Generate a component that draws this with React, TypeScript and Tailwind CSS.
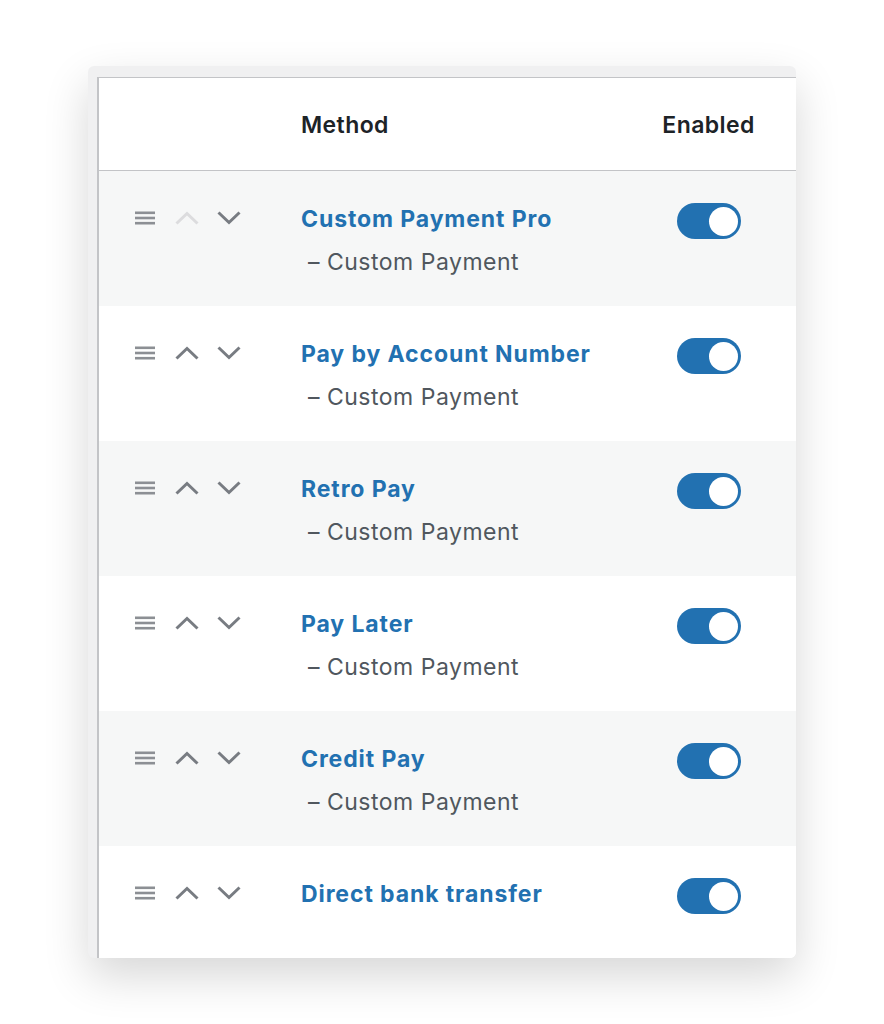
import React from "react";

type Method = {
  id: number;
  name: string;
  type?: string;
};

const METHODS: Method[] = [
  { id: 1, name: "Custom Payment Pro", type: "Custom Payment" },
  { id: 2, name: "Pay by Account Number", type: "Custom Payment" },
  { id: 3, name: "Retro Pay", type: "Custom Payment" },
  { id: 4, name: "Pay Later", type: "Custom Payment" },
  { id: 5, name: "Credit Pay", type: "Custom Payment" },
  { id: 6, name: "Direct bank transfer" },
];

const DragHandle = () => (
  <svg width="20" height="14" viewBox="0 0 20 14" className="text-[#8c8f94]">
    <rect x="0" y="0.5" width="20" height="2.6" fill="currentColor" />
    <rect x="0" y="5.7" width="20" height="2.6" fill="currentColor" />
    <rect x="0" y="10.9" width="20" height="2.6" fill="currentColor" />
  </svg>
);

const Chevron = ({ up, disabled }: { up?: boolean; disabled?: boolean }) => (
  <svg
    width="24"
    height="14"
    viewBox="0 0 24 14"
    className={disabled ? "text-[#dcdcde]" : "text-[#787c82]"}
  >
    <path
      d={up ? "M1.5 12.5 L12 2.5 L22.5 12.5" : "M1.5 1.5 L12 11.5 L22.5 1.5"}
      fill="none"
      stroke="currentColor"
      strokeWidth="3"
    />
  </svg>
);

const Toggle = () => (
  <div className="w-16 h-9 rounded-full bg-[#2271b1] flex items-center justify-end pr-[3px]">
    <div className="w-[29px] h-[29px] rounded-full bg-white" />
  </div>
);

const App = () => {
  return (
    <div
      className="w-[884px] h-[1024px] bg-white pt-[66px] pl-[88px]"
      style={{ fontFamily: "Inter, 'Noto Sans', sans-serif" }}
    >
      <div className="w-[708px] h-[892px] rounded-md bg-[#f0f0f1] pt-[11px] pl-[9px] overflow-hidden shadow-[0_18px_45px_rgba(0,0,0,0.16)]">
        <div className="h-full bg-white border-l-2 border-t border-[#c3c4c7]">
          <div className="grid grid-cols-[202px_1fr_174px] h-[93px] items-center border-b border-[#c3c4c7] text-[23px] font-semibold tracking-[0.4px] text-[#1d2327] pt-[2px]">
            <div />
            <div>Method</div>
            <div className="text-center pr-[1px]">Enabled</div>
          </div>
          {METHODS.map((m, i) => (
            <div
              key={m.id}
              className={`grid grid-cols-[202px_1fr_174px] ${
                i % 2 === 0 ? "bg-[#f6f7f7]" : "bg-white"
              } ${m.type ? "h-[135px]" : "h-[113px]"}`}
            >
              <div className="flex items-center gap-[20px] pl-[36px] pt-[40px] self-start">
                <DragHandle />
                <div className="flex items-center gap-[18px]">
                  <Chevron up disabled={i === 0} />
                  <Chevron />
                </div>
              </div>
              <div className="pt-[34px]">
                <div className="text-[23px] leading-[28px] font-bold tracking-[0.9px] text-[#2271b1]">
                  {m.name}
                </div>
                {m.type && (
                  <div className="mt-[15px] pl-[7px] text-[23px] leading-[28px] tracking-[0.5px] text-[#50575e]">
                    – {m.type}
                  </div>
                )}
              </div>
              <div className="flex justify-center pt-[32px]">
                <Toggle />
              </div>
            </div>
          ))}
        </div>
      </div>
    </div>
  );
};

export default App;
